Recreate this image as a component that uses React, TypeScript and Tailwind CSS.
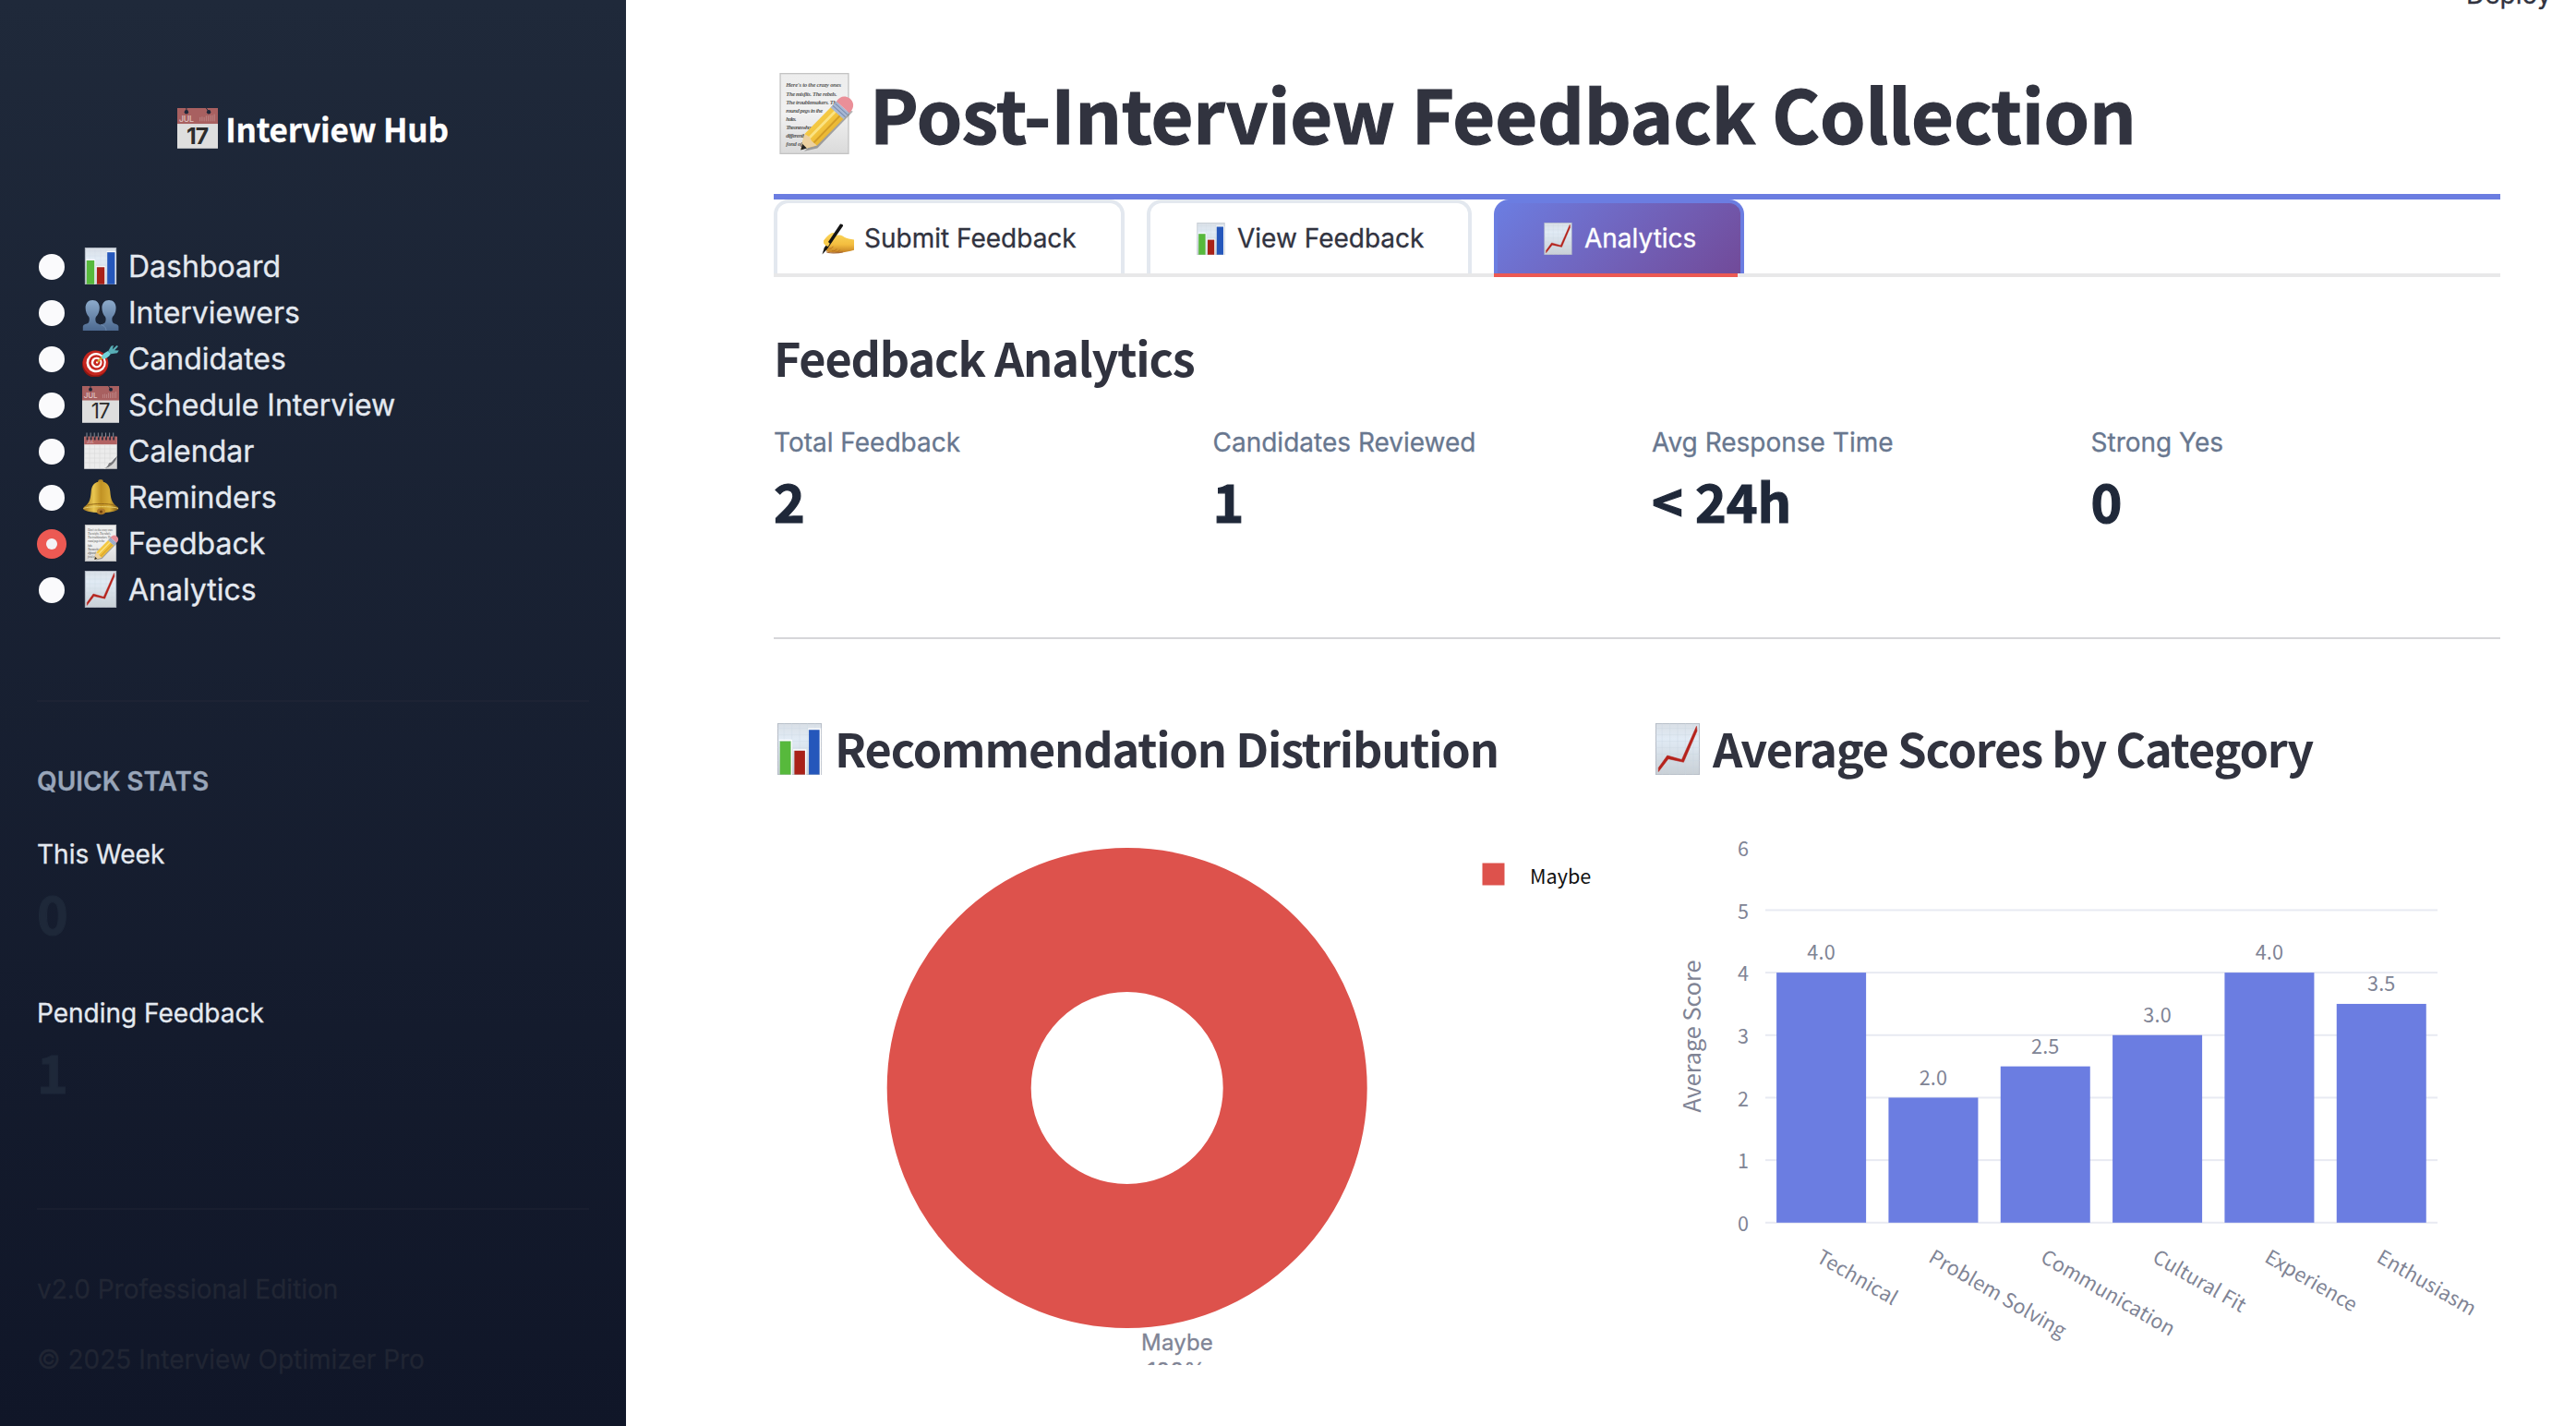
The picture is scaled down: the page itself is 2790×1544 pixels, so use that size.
import React from 'react';

type IconProps = { className: string };

const Svg = ({ className, children }: IconProps & { children: React.ReactNode }) => (
  <svg viewBox="0 0 40 40" className={`${className} shrink-0`} aria-hidden="true">
    {children}
  </svg>
);

const PaperGradient = ({ id }: { id: string }) => (
  <defs>
    <linearGradient id={id} x1="0" y1="0" x2="0" y2="1">
      <stop offset="0" stopColor="#d9dfe6" />
      <stop offset="0.3" stopColor="#e1ebf5" />
      <stop offset="1" stopColor="#c9d0d6" />
    </linearGradient>
  </defs>
);

const BarsIcon = ({ className }: IconProps) => (
  <Svg className={className}>
    <PaperGradient id="bars-paper" />
    <rect x="3.2" y="0.3" width="33.6" height="39.4" fill="url(#bars-paper)" stroke="#b5bcc6" strokeWidth="0.7" />
    <path d="M3 4h34M3 9h34M3 14h34M3 19h34M3 24h34M3 29h34M3 34h34M8 0v40M14 0v40M20 0v40M26 0v40M32 0v40" stroke="#cbd8e5" strokeWidth="0.25" />
    <path d="M4 13.2h9.8V40M15 20.6h9.8V40M26.5 4.4h9.6V40" fill="none" stroke="#fff" strokeWidth="0.9" />
    <rect x="4.8" y="14" width="8.4" height="25.7" fill="#57b93c" />
    <rect x="16" y="21.3" width="8.2" height="18.4" fill="#a92118" />
    <rect x="27.2" y="5.2" width="8.2" height="34.5" fill="#2557bb" />
  </Svg>
);

const TrendIcon = ({ className }: IconProps) => (
  <Svg className={className}>
    <PaperGradient id="trend-paper" />
    <rect x="3.2" y="0.3" width="33.6" height="39.4" fill="url(#trend-paper)" stroke="#b5bcc6" strokeWidth="0.7" />
    <path d="M3 4h34M3 9h34M3 14h34M3 19h34M3 24h34M3 29h34M3 34h34M8 0v40M14 0v40M20 0v40M26 0v40M32 0v40" stroke="#c8d4e0" strokeWidth="0.25" />
    <path d="M5.2 37.5V34.5L12 25l11.2 3.2L34.6 2.4l.4 3.6L24.6 30.2 12.8 27.6 5.2 37.5Z" fill="#b5221b" stroke="#b5221b" strokeWidth="0.4" />
  </Svg>
);

const PeopleIcon = ({ className }: IconProps) => (
  <Svg className={className}>
    <defs>
      <linearGradient id="people" gradientUnits="userSpaceOnUse" x1="0" y1="6" x2="0" y2="40">
        <stop offset="0" stopColor="#8fadcd" />
        <stop offset="1" stopColor="#4c6990" />
      </linearGradient>
    </defs>
    <path
      d="M11.2 7C6.5 7 3.6 10.5 3.6 15.2c0 4.3 1.6 7.6 3.6 9.8.9 1.4.9 4.8-.4 6.4C5 33 1 32.6.8 35.8V40h38.6v-4.2c-.2-3.2-4.2-2.8-6-4.4-1.3-1.6-1.3-5-.4-6.4 2-2.2 3.6-5.5 3.6-9.8C36.6 10.5 33.700 7 29 7s-7.600 3.500-7.600 8.200c0 4.300 1.600 7.600 3.600 9.800.9 1.400.9 4.800-.4 6.400-1.300 1.400-3.500 1.500-4.600 2-1.100-.5-3.300-.6-4.600-2-1.300-1.600-1.300-5-.4-6.400 2-2.200 3.800-5.500 3.800-9.800C18.800 10.500 15.900 7 11.200 7Z"
      fill="url(#people)"
    />
    <path d="M20 33.500c3 .8 5.500 2 6 6.500" fill="none" stroke="#88a3c2" strokeWidth="0.500" />
  </Svg>
);

const TargetIcon = ({ className }: IconProps) => (
  <Svg className={className}>
    <g transform="rotate(20 14 25)">
      <ellipse cx="14.500" cy="26.500" rx="13.800" ry="14" fill="#8f1712" />
      <ellipse cx="14.500" cy="24.800" rx="13.800" ry="13.500" fill="#c5261f" />
      <ellipse cx="15" cy="24.300" rx="10.700" ry="10.600" fill="#fff" />
      <ellipse cx="15.200" cy="24.100" rx="8.300" ry="8.200" fill="#c5261f" />
      <ellipse cx="15.400" cy="24" rx="5.900" ry="5.800" fill="#fff" />
      <ellipse cx="15.600" cy="23.900" rx="3.600" ry="3.600" fill="#c5261f" />
      <circle cx="15.800" cy="23.700" r="1.200" fill="#fff" />
    </g>
    <path d="m16.500 24 6-6" stroke="#d9a52f" strokeWidth="1.800" />
    <path d="M21 18.500c1-3.500 4-5 7-6.500l3 3c-2 3-5 5.500-8.500 6Z" fill="#73d3d9" />
    <path d="m28 12.500 3.300-5.700L34 6l-1.200 4.200L37.500 6l1.500 1-3.800 4.200 4.600.4-1.800 2.600-7 1Z" fill="#58aeb6" />
  </Svg>
);

const DateIcon = ({ className }: IconProps) => (
  <Svg className={className}>
    <rect width="40" height="40" fill="#dedede" />
    <rect width="40" height="15.500" fill="#a86060" />
    <circle cx="9" cy="3.800" r="2" fill="#1e2739" />
    <circle cx="31" cy="3.800" r="2" fill="#1e2739" />
    <path d="M9 3.500V0M31 3.500 28.500 0" stroke="#1e2739" strokeWidth="0.900" />
    <text x="1.800" y="13.300" fontSize="8" fontFamily="Inter" fontWeight="500" fill="#dfc4c4" letterSpacing="-0.200">JUL</text>
    <path d="M22.500 9v4M24.500 8.500V13M26.500 9v4M28.500 7.500V13M30.500 7.500V13M32.500 7V13M34.500 7V13M36.500 6V13" stroke="#bc8585" strokeWidth="0.900" />
    <text x="19.600" y="35.300" fontSize="22.500" fontFamily="Inter" textAnchor="middle" fill="#2c2c2c" letterSpacing="-1">17</text>
    <path d="M0 39.500h40" stroke="#b5b8bd" />
  </Svg>
);

const SpiralIcon = ({ className }: IconProps) => (
  <Svg className={className}>
    <path d="M2.200 5H37.800V26L25 39.700H2.200Z" fill="#ececec" />
    <path d="M37.800 25.500V39.700H22C29 38.500 35 33 37.800 25.500Z" fill="#d5d5d5" />
    <path d="M21.500 39.700c5-1 6.300-2.700 7.500-6.500 3-.6 6.200-2.400 8.800-7.700-.3 4.300-5.300 12.700-16.300 14.200Z" fill="#77777a" />
    <path d="M29 33.200c3-.6 6.200-2.400 8.800-7.700-1 3-4 6-8.800 7.700Z" fill="#fafafa" />
    <rect x="2.200" y="4.500" width="35.600" height="8.700" fill="#b26262" />
    <path d="M3 18h34M3 23h34M3 28h31M3 33h25M8 14v25M13.500 14v25M19 14v25M24.500 14v22M30 14v17" stroke="#d6d6d6" strokeWidth="0.500" />
    <text x="5" y="12.300" fontSize="4.200" fontFamily="Inter" fill="#dfc0c0">JUL</text>
    <path d="M5.500 .5v8M9.600 .5v8M13.700 .5v8M17.800 .5v8M21.900 .5v8M26 .5v8M30.100 .5v8M34.200 .5v8" stroke="#222b3a" strokeWidth="1.700" />
    <path d="M5 .5v5M9.100 .5v5M13.200 .5v5M17.300 .5v5M21.400 .5v5M25.500 .5v5M29.600 .5v5M33.700 .5v5" stroke="#9aa1ab" strokeWidth="0.800" />
  </Svg>
);

const BellIcon = ({ className }: IconProps) => (
  <Svg className={className}>
    <defs>
      <linearGradient id="bell" x1="0" y1="0" x2="1" y2="0">
        <stop offset="0" stopColor="#a0731a" />
        <stop offset="0.300" stopColor="#e9c650" />
        <stop offset="0.500" stopColor="#c19224" />
        <stop offset="0.750" stopColor="#d8ae38" />
        <stop offset="1" stopColor="#74500f" />
      </linearGradient>
    </defs>
    <rect x="17.200" y="1.200" width="5.600" height="5" rx="2" fill="#b88b27" />
    <ellipse cx="20.500" cy="35" rx="5.500" ry="4.200" fill="#9a6c1c" />
    <path d="M20 3.500c-7 0-9.700 4.500-10.300 10.500C9 21.500 8.500 25 4.500 29c-1.700 1.600-3.500 2-3.500 4 0 1.500 8 4.200 19.300 4.200S39.500 34.500 39.500 33c0-2-2-2.400-3.700-4-4-4-4.800-7.500-5.500-15C29.700 8 27 3.500 20 3.500Z" fill="url(#bell)" />
    <path d="M1.500 32.500c5-2.500 33-2.500 37.500 0" fill="none" stroke="#ead070" strokeWidth="1" />
    <path d="M5.500 29c7-2 23-2 29.500 0" fill="none" stroke="#94681a" strokeWidth="1" />
    <ellipse cx="20.500" cy="35.500" rx="4.500" ry="3" fill="#b37c2b" />
    <ellipse cx="20.500" cy="36" rx="1.600" ry="1.500" fill="#70420f" />
  </Svg>
);

const noteLines = [
  "Here's to the crazy ones",
  'The misfits. The rebels.',
  'The troublemakers. The',
  'round pegs in the',
  'holes.',
  'The ones who see',
  'differently. not',
  'fond of',
];

const MemoIcon = ({ className }: IconProps) => (
  <Svg className={className}>
    <defs>
      <linearGradient id="memo-paper" x1="0" y1="0" x2="0" y2="1">
        <stop offset="0" stopColor="#ededed" />
        <stop offset="0.500" stopColor="#f1f1f1" />
        <stop offset="1" stopColor="#dadada" />
      </linearGradient>
      <linearGradient id="memo-pencil" x1="0" y1="0" x2="1" y2="1">
        <stop offset="0" stopColor="#f9d95c" />
        <stop offset="0.500" stopColor="#f2c33c" />
        <stop offset="1" stopColor="#cf9420" />
      </linearGradient>
    </defs>
    <rect x="3.200" y="0.300" width="33.600" height="39.400" fill="url(#memo-paper)" stroke="#c4c4c4" strokeWidth="0.600" />
    <g fontFamily="Liberation Serif" fontStyle="italic" fontSize="3" fill="#5a5a5a">
      {noteLines.map((line, i) => (
        <text key={line} x="6" y={7 + i * 4.15} textLength={[27, 25, 26, 18, 5, 15, 14, 8][i]} lengthAdjust="spacing">
          {line}
        </text>
      ))}
    </g>
    <path d="m15 38.500 6.500-1.500L39 19l-2-1Z" fill="#000" opacity="0.300" />
    <path d="M13.300 37.700 15.200 30 29.500 15.500l6.300 5.600L21.300 35.700Z" fill="url(#memo-pencil)" />
    <path d="m17.300 32.200 14.700-15" stroke="#fbe382" strokeWidth="1.300" />
    <path d="m19.700 34.400 14.500-15" stroke="#d29c26" strokeWidth="0.900" />
    <path d="M13.300 37.700 15.200 30l2.500 1.500 1 2 2.600 2.200Z" fill="#ecd0a0" />
    <path d="m13.300 37.900.8-3 2.200 2.100Z" fill="#222" />
    <path d="m28 17 2.900-3 6.300 5.700-2.900 3Z" fill="#a9b8d3" />
    <path d="m29 16 6.300 5.700M30.200 14.900l6.200 5.700" stroke="#7c8fb2" strokeWidth="0.500" />
    <path d="M30.900 14c1.400-2.400 4-3.200 6.300-1.600 2.400 1.700 2.800 4.800 0 7.300Z" fill="#ea8f98" />
  </Svg>
);

const WritingIcon = ({ className }: IconProps) => (
  <Svg className={className}>
    <defs>
      <linearGradient id="hand" x1="0" y1="0" x2="0" y2="1">
        <stop offset="0" stopColor="#fbd75a" />
        <stop offset="0.600" stopColor="#f3bd3f" />
        <stop offset="1" stopColor="#c58124" />
      </linearGradient>
    </defs>
    <path d="M2.500 22c3-4 8-9.500 11.500-9.500 3 0 2.500 2.500 1.500 4 4-1.500 9-1.500 12.500 1.500 3 2 7.500 2.500 12 3v13c-6 1.500-13 3.500-20 3-6 .2-14 .5-14.500-3 0-2 1-3.500 2-5-3-.3-6-3-5-7Z" fill="url(#hand)" />
    <path d="M8 32c3 .8 5-.5 6-2.500M12.500 35c3 .5 5-.6 6-2.500M17 36.500c3 .2 4.500-1 5.500-2.700M8 26c3-1 6-3 7.500-9" fill="none" stroke="#b5701f" strokeWidth="1" />
    <path d="M6 36c1 2 14 2 20 .5" fill="none" stroke="#a86a35" strokeWidth="1.400" />
    <path d="M.5 39.500 3 31.500 22.500 2.300c1-1.300 4.500.4 3.800 2L6.500 33Z" fill="#141414" />
    <path d="M2.500 22.500c2-.5 5 .5 7.500 3.500l-2 3.500c-3-.3-6-3-5.500-7Z" fill="#f7cb4c" />
  </Svg>
);

const navItems = [
  { label: 'Dashboard', Icon: BarsIcon },
  { label: 'Interviewers', Icon: PeopleIcon },
  { label: 'Candidates', Icon: TargetIcon },
  { label: 'Schedule Interview', Icon: DateIcon },
  { label: 'Calendar', Icon: SpiralIcon },
  { label: 'Reminders', Icon: BellIcon },
  { label: 'Feedback', Icon: MemoIcon, active: true },
  { label: 'Analytics', Icon: TrendIcon },
];

const metrics = [
  ['Total Feedback', '2'],
  ['Candidates Reviewed', '1'],
  ['Avg Response Time', '< 24h'],
  ['Strong Yes', '0'],
];

const scores: [string, number][] = [
  ['Technical', 4],
  ['Problem Solving', 2],
  ['Communication', 2.5],
  ['Cultural Fit', 3],
  ['Experience', 4],
  ['Enthusiasm', 3.5],
];

const Radio = ({ active }: { active?: boolean }) => (
  <span className="flex size-8 items-center justify-center">
    {active ? (
      <span className="flex size-8 items-center justify-center rounded-full bg-[#ec5953]">
        <span className="size-3 rounded-full bg-[#f3f3f7]" />
      </span>
    ) : (
      <span className="size-7 rounded-full bg-[#fafafc]" />
    )}
  </span>
);

const Sidebar = () => (
  <aside className="h-full w-[678px] shrink-0 bg-linear-to-b from-[#1f293a] to-[#101628] px-10 pt-[114px] text-[28px] leading-[40px] text-[#e4e9f0] [-webkit-text-stroke:0.3px]">
    <div className="flex h-[50px] items-center justify-center gap-[8px] font-['Noto_Sans_CJK_SC',sans-serif] text-[35px] font-bold leading-[50px] tracking-[-0.25px] text-white">
      <DateIcon className="size-11" />
      <span>Interview Hub</span>
    </div>
    <nav className="mt-[100px]">
      {navItems.map(({ label, Icon, active }) => (
        <div key={label} className="flex h-[50px] items-center text-[32px] leading-[50px]">
          <Radio active={active} />
          <Icon className="mb-[2px] ml-[17px] mr-[10px] size-10" />
          <span>{label}</span>
        </div>
      ))}
    </nav>
    <div className="mt-[94px] h-[2px] bg-[#1d2334]" />
    <div className="mt-[66px] font-semibold text-[#98a5b9]">QUICK STATS</div>
    <div className="mt-[39px]">This Week</div>
    <div className="mt-[2px] font-['Noto_Sans_CJK_SC',sans-serif] text-[57.4px] font-bold leading-[80px] text-[#1e2839] [-webkit-text-stroke:1.2px]">0</div>
    <div className="mt-[50px]">Pending Feedback</div>
    <div className="mt-[2px] font-['Noto_Sans_CJK_SC',sans-serif] text-[57.4px] font-bold leading-[80px] text-[#1e2839] [-webkit-text-stroke:1.2px]">1</div>
    <div className="mt-[109px] h-[2px] bg-[#191e2f]" />
    <div className="mt-[66px] text-[#212634]">v2.0 Professional Edition</div>
    <div className="mt-[36px] text-[#202533]">© 2025 Interview Optimizer Pro</div>
  </aside>
);

const Tabs = () => (
  <div className="flex h-[84px] gap-6 border-b-4 border-[#e8e8e9] text-[28px] leading-[40px] [-webkit-text-stroke:0.3px]">
    <div className="flex h-20 w-[380px] items-center gap-[11px] whitespace-nowrap rounded-t-2xl border-x-4 border-t-4 border-[#e3e8ef] pl-12">
      <WritingIcon className="size-[35px]" />
      <span>Submit Feedback</span>
    </div>
    <div className="flex h-20 w-[352px] items-center gap-[11px] whitespace-nowrap rounded-t-2xl border-x-4 border-t-4 border-[#e3e8ef] pl-12">
      <BarsIcon className="size-[35px]" />
      <span>View Feedback</span>
    </div>
    <div className="relative flex h-20 w-[271px] items-center gap-[11px] whitespace-nowrap rounded-t-2xl border-x-4 border-t-4 border-[#6b7de1] bg-linear-135 from-[#6b7de1] to-[#714a99] pl-12 text-white">
      <TrendIcon className="size-[35px]" />
      <span>Analytics</span>
      <div className="absolute -bottom-1 -left-1 h-1 w-[264px] bg-[#ec5953]" />
    </div>
  </div>
);

const PieChart = () => (
  <svg viewBox="838 844 919 634" className="block h-[634px] w-[919px] overflow-hidden">
    <circle cx="1220.700" cy="1178" r="182" fill="none" stroke="#dd524c" strokeWidth="156" />
    <rect x="1605.500" y="934.500" width="24" height="24" fill="#dd524c" />
    <text x="1657" y="957" fontSize="21.600" fontFamily="Noto Sans CJK SC" fill="#111">Maybe</text>
    <g fontFamily="Inter" fontSize="24" fill="#808495" stroke="#808495" strokeWidth="0.300" textAnchor="middle">
      <text x="1275" y="1461.700" letterSpacing="0.150">Maybe</text>
      <text x="1274" y="1493">100%</text>
    </g>
  </svg>
);

const yFor = (v: number) => 1323.8 - v * 67.67;

const BarChart = () => (
  <svg
    viewBox="1789 844 919 634"
    className="block h-[634px] w-[919px] [-webkit-text-stroke:0.3px]"
    fontFamily="Noto Sans CJK SC"
    fontSize="21.600"
    fill="#808495"
  >
    {[0, 1, 2, 3, 4, 5].map((v) => (
      <rect key={v} x="1912" y={yFor(v) - 1} width="728" height="2" fill="#e8eaf2" />
    ))}
    {[0, 1, 2, 3, 4, 5, 6].map((v) => (
      <text key={v} x="1894" y={yFor(v) + 9.3} textAnchor="end">{v}</text>
    ))}
    {scores.map(([label, value], i) => {
      const cx = 1972.6 + i * 121.33;
      return (
        <g key={label}>
          <rect x={cx - 48.5} y={yFor(value)} width="97" height={value * 67.67} fill="#6b7de1" />
          <text x={cx} y={yFor(value) - 13.8} textAnchor="middle" letterSpacing="0.200">{value.toFixed(1)}</text>
          <text transform={`translate(${cx - 6.5} 1365.500) rotate(30)`} letterSpacing="0.100">{label}</text>
        </g>
      );
    })}
    <text transform="translate(1842 1122) rotate(-90)" fontSize="25.200" textAnchor="middle">Average Score</text>
  </svg>
);

const SectionTitle = ({ icon, children }: { icon: React.ReactNode; children: React.ReactNode }) => (
  <h3 className="flex h-[68px] items-center gap-[10px] whitespace-nowrap font-['Noto_Sans_CJK_SC',sans-serif] text-[50.4px] font-bold leading-[68px] tracking-[-1.15px]">
    {icon}
    <span>{children}</span>
  </h3>
);

export default function App() {
  return (
    <div className="relative flex h-[1544px] w-[2790px] overflow-hidden bg-white font-[Inter,sans-serif] text-[#31333f]">
      <Sidebar />
      <main className="w-[2030px] pl-40 pt-[72px]">
        <h1 className="flex h-[99px] items-center gap-4 whitespace-nowrap font-['Noto_Sans_CJK_SC',sans-serif] text-[79.2px] font-bold leading-[99px] tracking-[-0.16px] [-webkit-text-stroke:1.2px]">
          <MemoIcon className="mt-[3px] size-[88px] [-webkit-text-stroke:0px]" />
          <span>Post-Interview Feedback Collection</span>
        </h1>
        <div className="mt-[39px] h-[6px] bg-[#6b7de1]" />
        <Tabs />
        <h3 className="mt-[53px] whitespace-nowrap font-['Noto_Sans_CJK_SC',sans-serif] text-[50.4px] font-bold leading-[68px] tracking-[-1.17px]">
          Feedback Analytics
        </h3>
        <div className="mt-[38px] grid grid-cols-4 gap-8">
          {metrics.map(([label, value]) => (
            <div key={label}>
              <div className="text-[28px] leading-[40px] text-[#68778f] [-webkit-text-stroke:0.3px]">{label}</div>
              <div className="mt-[2px] font-['Noto_Sans_CJK_SC',sans-serif] text-[57.4px] font-bold leading-[80px] text-[#1f2839] [-webkit-text-stroke:1.2px]">
                {value}
              </div>
            </div>
          ))}
        </div>
        <div className="mt-[109px] h-[2px] bg-[#d6d6d9]" />
        <div className="mt-[84px] grid grid-cols-2 gap-8">
          <section>
            <SectionTitle icon={<BarsIcon className="mt-[2px] size-14" />}>Recommendation Distribution</SectionTitle>
            <PieChart />
          </section>
          <section>
            <SectionTitle icon={<TrendIcon className="mt-[2px] size-14" />}>Average Scores by Category</SectionTitle>
            <BarChart />
          </section>
        </div>
      </main>
      <div className="absolute left-[2671px] top-[-26px] text-[28px] leading-[40px] [-webkit-text-stroke:0.3px]">Deploy</div>
    </div>
  );
}
